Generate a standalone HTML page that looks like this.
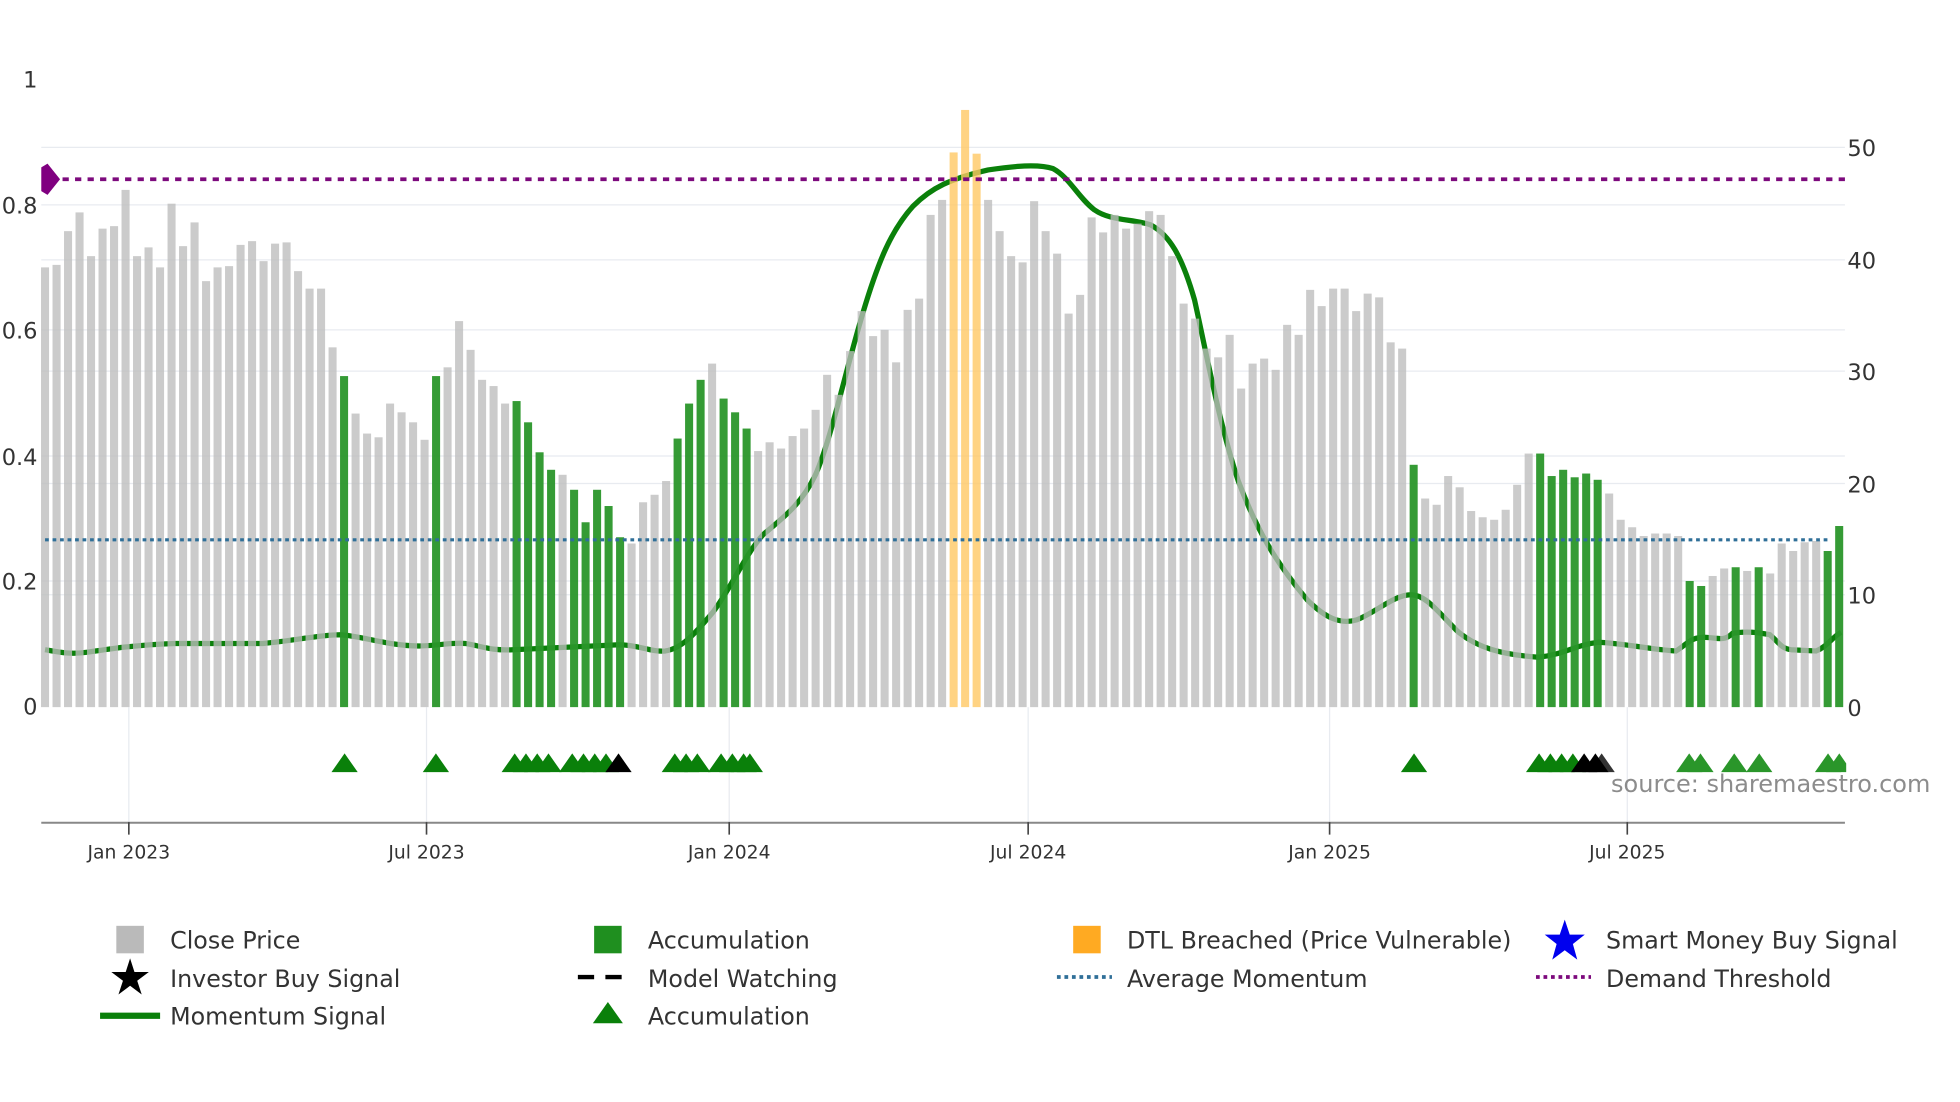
<!DOCTYPE html>
<html><head><meta charset="utf-8"><style>
html,body{margin:0;padding:0;background:#fff;}
svg{display:block;}
text{font-family:"DejaVu Sans","Liberation Sans",sans-serif;}
</style></head><body>
<svg width="1960" height="1102" viewBox="0 0 1567 882" preserveAspectRatio="none" xmlns="http://www.w3.org/2000/svg">
<defs><clipPath id="c"><rect x="0" y="0" width="1560" height="566"/></clipPath></defs>
<rect width="1567" height="882" fill="#fff"/>
<g stroke="#e8ebf0" stroke-width="1">
<line x1="33" x2="1475" y1="118" y2="118"/><line x1="33" x2="1475" y1="164" y2="164"/>
<line x1="33" x2="1475" y1="208" y2="208"/><line x1="33" x2="1475" y1="264" y2="264"/>
<line x1="33" x2="1475" y1="297" y2="297"/><line x1="33" x2="1475" y1="365" y2="365"/>
<line x1="33" x2="1475" y1="387" y2="387"/><line x1="33" x2="1475" y1="465" y2="465"/>
<line x1="33" x2="1475" y1="476" y2="476"/>
<line x1="103" x2="103" y1="566" y2="658"/><line x1="341" x2="341" y1="566" y2="658"/>
<line x1="583" x2="583" y1="566" y2="658"/><line x1="822" x2="822" y1="566" y2="658"/>
<line x1="1063" x2="1063" y1="566" y2="658"/><line x1="1301" x2="1301" y1="566" y2="658"/>
</g>
<path d="M36,520 C48,522 56,524 70,522 C90,519 110,516 140,515 L210,515 C235,513 255,508 272,508 C290,509 310,517 335,517 C350,517 360,514 372,515 C385,517 392,521 410,520 C430,519 450,518 495,516 C510,516 520,522 532,521 C545,519 555,508 570,490 C585,470 595,445 610,428 C625,415 640,405 652,380 C665,350 675,300 690,250 C702,210 712,185 730,165 C745,150 760,143 790,136 C810,133 830,131 842,135 C855,142 862,158 875,168 C888,177 905,175 920,180 C935,188 945,205 955,240 C965,285 975,340 990,385 C1005,425 1020,450 1045,480 C1060,495 1072,500 1085,496 C1100,490 1115,476 1128,476 C1140,476 1150,490 1165,505 C1180,518 1200,524 1230,526 C1250,524 1260,516 1278,514 C1300,515 1320,520 1340,521 C1348,516 1352,510 1362,510 C1372,510 1378,514 1385,507 C1395,505 1405,506 1415,508 C1422,514 1424,519 1432,520 L1452,521 C1460,518 1465,510 1472,506" fill="none" stroke="#0a800a" stroke-width="4.2"/>
<g clip-path="url(#c)"><g transform="translate(32.8,0) scale(1.0049,1)">
<g fill="#bdbdbd" fill-opacity="0.78">
<rect x="0" y="214" width="6.4" height="400"/><rect x="9.15" y="212" width="6.4" height="400"/><rect x="18.3" y="185" width="6.4" height="400"/><rect x="27.45" y="170" width="6.4" height="400"/><rect x="36.6" y="205" width="6.4" height="400"/><rect x="45.75" y="183" width="6.4" height="400"/><rect x="54.9" y="181" width="6.4" height="400"/><rect x="64.05" y="152" width="6.4" height="420"/><rect x="73.2" y="205" width="6.4" height="400"/><rect x="82.35" y="198" width="6.4" height="400"/><rect x="91.5" y="214" width="6.4" height="400"/><rect x="100.65" y="163" width="6.4" height="410"/><rect x="109.8" y="197" width="6.4" height="400"/><rect x="118.95" y="178" width="6.4" height="400"/><rect x="128.1" y="225" width="6.4" height="400"/><rect x="137.25" y="214" width="6.4" height="400"/><rect x="146.4" y="213" width="6.4" height="400"/><rect x="155.55" y="196" width="6.4" height="400"/><rect x="164.7" y="193" width="6.4" height="400"/><rect x="173.85" y="209" width="6.4" height="400"/><rect x="183" y="195" width="6.4" height="400"/><rect x="192.15" y="194" width="6.4" height="400"/><rect x="201.3" y="217" width="6.4" height="400"/><rect x="210.45" y="231" width="6.4" height="400"/><rect x="219.6" y="231" width="6.4" height="400"/><rect x="228.75" y="278" width="6.4" height="400"/>
<rect x="247.05" y="331" width="6.4" height="400"/><rect x="256.2" y="347" width="6.4" height="400"/><rect x="265.35" y="350" width="6.4" height="400"/><rect x="274.5" y="323" width="6.4" height="400"/><rect x="283.65" y="330" width="6.4" height="400"/><rect x="292.8" y="338" width="6.4" height="400"/><rect x="301.95" y="352" width="6.4" height="400"/>
<rect x="320.25" y="294" width="6.4" height="400"/><rect x="329.4" y="257" width="6.4" height="400"/><rect x="338.55" y="280" width="6.4" height="400"/><rect x="347.7" y="304" width="6.4" height="400"/><rect x="356.85" y="309" width="6.4" height="400"/><rect x="366" y="323" width="6.4" height="400"/>
<rect x="411.75" y="380" width="6.4" height="400"/><rect x="466.65" y="435" width="6.4" height="400"/><rect x="475.8" y="402" width="6.4" height="400"/><rect x="484.95" y="396" width="6.4" height="400"/><rect x="494.1" y="385" width="6.4" height="400"/><rect x="530.7" y="291" width="6.4" height="400"/>
<rect x="567.3" y="361" width="6.4" height="400"/><rect x="576.45" y="354" width="6.4" height="400"/><rect x="585.6" y="359" width="6.4" height="400"/><rect x="594.75" y="349" width="6.4" height="400"/><rect x="603.9" y="343" width="6.4" height="400"/><rect x="613.05" y="328" width="6.4" height="400"/><rect x="622.2" y="300" width="6.4" height="400"/><rect x="631.35" y="316" width="6.4" height="400"/><rect x="640.5" y="281" width="6.4" height="400"/><rect x="649.65" y="249" width="6.4" height="400"/><rect x="658.8" y="269" width="6.4" height="400"/><rect x="667.95" y="264" width="6.4" height="400"/><rect x="677.1" y="290" width="6.4" height="400"/><rect x="686.25" y="248" width="6.4" height="400"/><rect x="695.4" y="239" width="6.4" height="400"/><rect x="704.55" y="172" width="6.4" height="400"/><rect x="713.7" y="160" width="6.4" height="410"/>
<rect x="750.3" y="160" width="6.4" height="410"/><rect x="759.45" y="185" width="6.4" height="400"/><rect x="768.6" y="205" width="6.4" height="400"/><rect x="777.75" y="210" width="6.4" height="400"/><rect x="786.9" y="161" width="6.4" height="410"/><rect x="796.05" y="185" width="6.4" height="400"/><rect x="805.2" y="203" width="6.4" height="400"/><rect x="814.35" y="251" width="6.4" height="400"/><rect x="823.5" y="236" width="6.4" height="400"/><rect x="832.65" y="174" width="6.4" height="400"/><rect x="841.8" y="186" width="6.4" height="400"/><rect x="850.95" y="172" width="6.4" height="400"/><rect x="860.1" y="183" width="6.4" height="400"/><rect x="869.25" y="179" width="6.4" height="400"/><rect x="878.4" y="169" width="6.4" height="400"/><rect x="887.55" y="172" width="6.4" height="400"/><rect x="896.7" y="205" width="6.4" height="400"/><rect x="905.85" y="243" width="6.4" height="400"/><rect x="915" y="255" width="6.4" height="400"/><rect x="924.15" y="279" width="6.4" height="400"/><rect x="933.3" y="286" width="6.4" height="400"/><rect x="942.45" y="268" width="6.4" height="400"/><rect x="951.6" y="311" width="6.4" height="400"/><rect x="960.75" y="291" width="6.4" height="400"/><rect x="969.9" y="287" width="6.4" height="400"/><rect x="979.05" y="296" width="6.4" height="400"/><rect x="988.2" y="260" width="6.4" height="400"/><rect x="997.35" y="268" width="6.4" height="400"/><rect x="1006.5" y="232" width="6.4" height="400"/><rect x="1015.65" y="245" width="6.4" height="400"/><rect x="1024.8" y="231" width="6.4" height="400"/><rect x="1033.95" y="231" width="6.4" height="400"/><rect x="1043.1" y="249" width="6.4" height="400"/><rect x="1052.25" y="235" width="6.4" height="400"/><rect x="1061.4" y="238" width="6.4" height="400"/><rect x="1070.55" y="274" width="6.4" height="400"/><rect x="1079.7" y="279" width="6.4" height="400"/>
<rect x="1098" y="399" width="6.4" height="400"/><rect x="1107.15" y="404" width="6.4" height="400"/><rect x="1116.3" y="381" width="6.4" height="400"/><rect x="1125.45" y="390" width="6.4" height="400"/><rect x="1134.6" y="409" width="6.4" height="400"/><rect x="1143.75" y="414" width="6.4" height="400"/><rect x="1152.9" y="416" width="6.4" height="400"/><rect x="1162.05" y="408" width="6.4" height="400"/><rect x="1171.2" y="388" width="6.4" height="400"/><rect x="1180.35" y="363" width="6.4" height="400"/>
<rect x="1244.4" y="395" width="6.4" height="400"/><rect x="1253.55" y="416" width="6.4" height="400"/><rect x="1262.7" y="422" width="6.4" height="400"/><rect x="1271.85" y="429" width="6.4" height="400"/><rect x="1281" y="427" width="6.4" height="400"/><rect x="1290.15" y="427" width="6.4" height="400"/><rect x="1299.3" y="429" width="6.4" height="400"/>
<rect x="1326.75" y="461" width="6.4" height="400"/><rect x="1335.9" y="455" width="6.4" height="400"/><rect x="1354.2" y="457" width="6.4" height="400"/><rect x="1372.5" y="459" width="6.4" height="400"/><rect x="1381.65" y="435" width="6.4" height="400"/><rect x="1390.8" y="441" width="6.4" height="400"/><rect x="1399.95" y="434" width="6.4" height="400"/><rect x="1409.1" y="433" width="6.4" height="400"/>
</g>
<g fill="#2a962a" fill-opacity="0.95">
<rect x="237.9" y="301" width="6.4" height="400"/><rect x="311.1" y="301" width="6.4" height="400"/>
<rect x="375.15" y="321" width="6.4" height="400"/><rect x="384.3" y="338" width="6.4" height="400"/><rect x="393.45" y="362" width="6.4" height="400"/><rect x="402.6" y="376" width="6.4" height="400"/>
<rect x="420.9" y="392" width="6.4" height="400"/><rect x="430.05" y="418" width="6.4" height="400"/><rect x="439.2" y="392" width="6.4" height="400"/><rect x="448.35" y="405" width="6.4" height="400"/><rect x="457.5" y="430" width="6.4" height="400"/>
<rect x="503.25" y="351" width="6.4" height="400"/><rect x="512.4" y="323" width="6.4" height="400"/><rect x="521.55" y="304" width="6.4" height="400"/>
<rect x="539.85" y="319" width="6.4" height="400"/><rect x="549" y="330" width="6.4" height="400"/><rect x="558.15" y="343" width="6.4" height="400"/>
<rect x="1088.85" y="372" width="6.4" height="400"/>
<rect x="1189.5" y="363" width="6.4" height="400"/><rect x="1198.65" y="381" width="6.4" height="400"/><rect x="1207.8" y="376" width="6.4" height="400"/><rect x="1216.95" y="382" width="6.4" height="400"/><rect x="1226.1" y="379" width="6.4" height="400"/><rect x="1235.25" y="384" width="6.4" height="400"/>
<rect x="1308.45" y="465" width="6.4" height="400"/><rect x="1317.6" y="469" width="6.4" height="400"/><rect x="1345.05" y="454" width="6.4" height="400"/><rect x="1363.35" y="454" width="6.4" height="400"/>
<rect x="1418.25" y="441" width="6.4" height="400"/><rect x="1427.4" y="421" width="6.4" height="400"/>
</g>
<g fill="#ffc864" fill-opacity="0.8">
<rect x="722.85" y="122" width="6.4" height="450"/><rect x="732" y="88" width="6.4" height="480"/><rect x="741.15" y="123" width="6.4" height="450"/>
</g>
</g></g>
<line x1="40" x2="1475" y1="143.5" y2="143.5" stroke="#7d0a7d" stroke-width="3" stroke-dasharray="5,5"/>
<path d="M33,134 L38,131 L48,143.5 L38,156 L33,153 Z" fill="#800080"/>
<line x1="36" x2="1462" y1="432" y2="432" stroke="#2f6f98" stroke-width="2.5" stroke-dasharray="3,3"/>
<g fill="#0a800a">
<path d="M265,618 L275.5,603 L286,618Z"/><path d="M338,618 L348.5,603 L359,618Z"/>
<path d="M401,618 L411.5,603 L422,618Z"/><path d="M410,618 L420.5,603 L431,618Z"/><path d="M419,618 L429.5,603 L440,618Z"/><path d="M428,618 L438.5,603 L449,618Z"/>
<path d="M447,618 L457.5,603 L468,618Z"/><path d="M456,618 L466.5,603 L477,618Z"/><path d="M465,618 L475.5,603 L486,618Z"/><path d="M474,618 L484.5,603 L495,618Z"/>
<path d="M529,618 L539.5,603 L550,618Z"/><path d="M538,618 L548.5,603 L559,618Z"/><path d="M547,618 L557.5,603 L568,618Z"/>
<path d="M566,618 L576.5,603 L587,618Z"/><path d="M575,618 L585.5,603 L596,618Z"/><path d="M584,618 L594.5,603 L605,618Z"/><path d="M589,618 L599.5,603 L610,618Z"/>
<path d="M1120,618 L1130.5,603 L1141,618Z"/>
<path d="M1220,618 L1230.5,603 L1241,618Z"/><path d="M1229,618 L1239.5,603 L1250,618Z"/><path d="M1238,618 L1248.5,603 L1259,618Z"/><path d="M1247,618 L1257.5,603 L1268,618Z"/>
</g>
<path d="M484,618 L494.5,603 L505,618Z" fill="#000"/>
<path d="M1270,618 L1280.5,603 L1291,618Z" fill="#333"/>
<path d="M1256,618 L1266.5,603 L1277,618Z" fill="#000"/><path d="M1265,618 L1275.5,603 L1286,618Z" fill="#000"/>
<g fill="#2a962a">
<path d="M1340,618 L1350.5,603 L1361,618Z"/><path d="M1349,618 L1359.5,603 L1370,618Z"/>
<path d="M1376,618 L1386.5,603 L1397,618Z"/><path d="M1396,618 L1406.5,603 L1417,618Z"/>
<path d="M1451,618 L1461.5,603 L1472,618Z"/><path d="M1460,618 L1470.5,603 L1476,611 L1476,618Z"/>
</g>
<text x="1288" y="634" font-size="19.2" fill="#8c8c8c">source: sharemaestro.com</text>
<line x1="33" x2="1475" y1="658.5" y2="658.5" stroke="#888" stroke-width="1.6"/>
<g stroke="#444" stroke-width="1.3">
<line x1="103" x2="103" y1="658" y2="668"/><line x1="341" x2="341" y1="658" y2="668"/><line x1="583" x2="583" y1="658" y2="668"/><line x1="822" x2="822" y1="658" y2="668"/><line x1="1063" x2="1063" y1="658" y2="668"/><line x1="1301" x2="1301" y1="658" y2="668"/>
</g>
<g font-size="15" fill="#333" text-anchor="middle">
<text x="103" y="687">Jan 2023</text><text x="341" y="687">Jul 2023</text><text x="583" y="687">Jan 2024</text><text x="822" y="687">Jul 2024</text><text x="1063" y="687">Jan 2025</text><text x="1301" y="687">Jul 2025</text>
</g>
<g font-size="18" fill="#333" text-anchor="end">
<text x="30" y="70">1</text><text x="30" y="171">0.8</text><text x="30" y="271">0.6</text><text x="30" y="372">0.4</text><text x="30" y="472">0.2</text><text x="30" y="572">0</text>
</g>
<g font-size="18" fill="#333">
<text x="1477" y="125">50</text><text x="1477" y="215">40</text><text x="1477" y="304">30</text><text x="1477" y="394">20</text><text x="1477" y="483">10</text><text x="1477" y="573">0</text>
</g>
<g font-size="19" fill="#333">
<rect x="93" y="741" width="22" height="22" fill="#bababa"/><text x="136" y="759">Close Price</text>
<path d="M104,767 L107.5,778 L119,778 L109.7,785 L113.3,796 L104,789 L94.7,796 L98.3,785 L89,778 L100.5,778Z" fill="#000"/><text x="136" y="790">Investor Buy Signal</text>
<line x1="80" x2="128" y1="813" y2="813" stroke="#0a800a" stroke-width="5"/><text x="136" y="820">Momentum Signal</text>
<rect x="475" y="741" width="22" height="22" fill="#1f8f1f"/><text x="518" y="759">Accumulation</text>
<line x1="462" x2="506" y1="782" y2="782" stroke="#000" stroke-width="3.5" stroke-dasharray="13,9"/><text x="518" y="790">Model Watching</text>
<path d="M474,819 L486,802 L498,819Z" fill="#0a800a"/><text x="518" y="820">Accumulation</text>
<rect x="858" y="741" width="22" height="22" fill="#ffaa22"/><text x="901" y="759">DTL Breached (Price Vulnerable)</text>
<line x1="845" x2="889" y1="782" y2="782" stroke="#2f6f98" stroke-width="3" stroke-dasharray="3,3"/><text x="901" y="790">Average Momentum</text>
<path d="M1251,736 L1255,748 L1267,748 L1257.5,755.5 L1261,768 L1251,760.5 L1241,768 L1244.5,755.5 L1235,748 L1247,748Z" fill="#0000ee"/><text x="1284" y="759">Smart Money Buy Signal</text>
<line x1="1228" x2="1272" y1="782" y2="782" stroke="#7d0a7d" stroke-width="3" stroke-dasharray="3,3"/><text x="1284" y="790">Demand Threshold</text>
</g>
</svg>
</body></html>
